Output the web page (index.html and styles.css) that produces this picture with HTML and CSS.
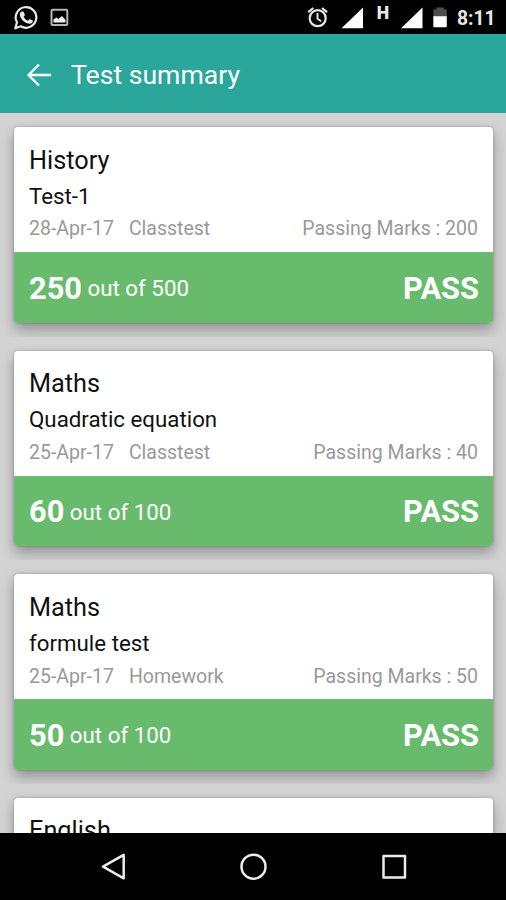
FILE: index.html
```html
<!DOCTYPE html>
<html lang="en">
<head>
<meta charset="utf-8">
<title>Test summary</title>
<link rel="stylesheet" href="styles.css">
</head>
<body>
<div class="status">
  <svg class="status-icons" width="80" height="34" viewBox="0 0 80 34" fill="none" stroke="#e8e8e8">
    <path d="M15.300 28.300L17 22.400A10.300 10.300 0 1 1 20.800 26.300Z" stroke-width="2.200" stroke-linejoin="round"/>
    <path d="M21.300 11.800l2-.6 1.700 3.800-1.300 1.700c1 2 2.300 3.200 4.200 4l1.600-1.600 3.500 1.700c0 2-2 3.300-4 3-4.500-.8-8.400-4.500-9.200-8.800-.2-1.300.4-2.500 1.500-3.200z" fill="#e8e8e8" stroke="none"/>
    <rect x="51.500" y="9.700" width="15.800" height="15.300" rx="1" stroke="#b5b5b5" stroke-width="2"/>
    <path d="M53.500 22.500v-3l3-2 2 1.500 3.500-3 3.500 4v2.500z" fill="#f4f4f4" stroke="none"/>
  </svg>
  <svg class="status-icons" width="152" height="34" viewBox="300 0 152 34" fill="none" stroke="#e8e8e8">
    <circle cx="317.700" cy="18.200" r="8" stroke-width="2.200"/>
    <path d="M317.500 13v5.700l3.700 2.500" stroke-width="1.900"/>
    <path d="M308.300 12.200l5-4.200M322 8l5 4.200" stroke-width="2.200"/>
    <path d="M341.500 28.300L363 7.500v20.800zM401 28.300L422.500 7.500v20.800z" fill="#fff" stroke="none"/>
    <path d="M433.300 17V9.500h3V7.500h7.500v2h3V17z" fill="#4d4d4d" stroke="none"/>
    <path d="M433.300 16.300h13.500v10a1 1 0 0 1-1 1h-11.500a1 1 0 0 1-1-1z" fill="#fff" stroke="none"/>
    <text class="network" x="376.700" y="19.300">H</text>
  </svg>
  <span class="clock">8:11</span>
</div>
<header class="bar">
  <svg class="back" width="26" height="24" viewBox="0 0 26 24" fill="none" stroke="#fff" stroke-width="2.300"><path d="M25 12H2.500M13 1.500L2.500 12 13 22.500"/></svg>
  <h1>Test summary</h1>
</header>
<main class="list">
  <div class="item"><article class="card">
    <div class="info"><h2>History</h2><h3>Test-1</h3>
      <p class="meta"><span>28-Apr-17</span><span>Classtest</span><span class="marks">Passing Marks : 200</span></p></div>
    <div class="result"><b>250</b><span class="total">out of 500</span><b class="verdict">PASS</b></div>
  </article></div>
  <div class="item"><article class="card">
    <div class="info"><h2>Maths</h2><h3>Quadratic equation</h3>
      <p class="meta"><span>25-Apr-17</span><span>Classtest</span><span class="marks">Passing Marks : 40</span></p></div>
    <div class="result"><b>60</b><span class="total">out of 100</span><b class="verdict">PASS</b></div>
  </article></div>
  <div class="item"><article class="card">
    <div class="info"><h2>Maths</h2><h3>formule test</h3>
      <p class="meta"><span>25-Apr-17</span><span>Homework</span><span class="marks">Passing Marks : 50</span></p></div>
    <div class="result"><b>50</b><span class="total">out of 100</span><b class="verdict">PASS</b></div>
  </article></div>
  <div class="item"><article class="card">
    <div class="info"><h2>English</h2></div>
  </article></div>
</main>
<nav class="nav">
  <svg width="506" height="67" viewBox="0 833 506 67" fill="none" stroke="#ececec" stroke-width="2.500" stroke-linejoin="round">
    <path d="M103 866.700L123.700 854.800V878.300Z"/>
    <circle cx="253.500" cy="866.700" r="12"/>
    <rect x="383.500" y="856" width="21.500" height="21.500"/>
  </svg>
</nav>
</body>
</html>
```
FILE: styles.css
```css
* { box-sizing: border-box; margin: 0; padding: 0; }
body {
  width: 506px;
  height: 900px;
  display: flex;
  flex-direction: column;
  overflow: hidden;
  background: #d3d3d3;
  color: #111;
  font-family: Roboto, "Liberation Sans", sans-serif;
}
svg { display: block; flex: none; }
.status {
  flex: none;
  height: 34px;
  display: flex;
  justify-content: space-between;
  padding-right: 11px;
  background: #000;
  color: #e8e8e8;
}
.status-icons:nth-child(2) { margin-left: auto; margin-right: 5px; }
.network { font-size: 17.600px; font-weight: 900; fill: #e8e8e8; stroke: none; }
.clock { width: 38px; font-size: 19.300px; font-weight: 700; line-height: 37px; white-space: nowrap; }
.bar {
  flex: none;
  height: 79px;
  display: flex;
  align-items: center;
  padding: 2px 0 0 26px;
  background: #2ba69b;
  color: #fff;
}
.bar h1 { margin-left: 19px; font-size: 26.600px; font-weight: 400; line-height: 31px; }
.list { flex: 1; min-height: 0; overflow: hidden; }
.item { height: 223.600px; padding: 14px 13px 14px 14px; overflow: hidden; }
.card {
  height: 195.600px;
  border-radius: 4px;
  overflow: hidden;
  background: #fff;
  box-shadow: 0 0 3px rgba(0, 0, 0, .25), 0 7px 14px rgba(0, 0, 0, .3);
}
.info { height: 125.300px; padding: 16.600px 15px 0; }
.info h2 { font-size: 25.300px; font-weight: 400; line-height: 33px; }
.info h3 { margin-top: 4px; font-size: 22.300px; font-weight: 400; line-height: 30px; }
.meta { display: flex; gap: 15px; margin-top: 5.900px; font-size: 19.500px; line-height: 26px; color: #999; white-space: nowrap; }
.marks { margin-left: auto; }
.result {
  height: 70.300px;
  display: flex;
  align-items: center;
  padding: 1.500px 14px 0 15px;
  background: #68bb6c;
  color: #fff;
}
.result b { font-size: 30.800px; font-weight: 700; }
.total { margin-left: 5.500px; font-size: 22.300px; }
.result .verdict { margin-left: auto; }
.nav { flex: none; height: 67px; background: #000; }
```
